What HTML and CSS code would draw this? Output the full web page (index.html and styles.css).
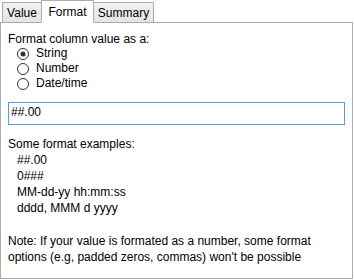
FILE: index.html
```html
<!DOCTYPE html>
<html>
<head>
<meta charset="utf-8">
<link rel="stylesheet" href="styles.css">
</head>
<body>
<div class="tabctl">
  <div class="tabs">
    <div class="tab t-value">Value</div>
    <div class="tab t-format sel">Format</div>
    <div class="tab t-summary">Summary</div>
  </div>
  <div class="panel">
    <div class="label">Format column value as a:</div>
    <div class="radios">
      <div class="radio">
        <svg width="12" height="12" viewBox="0 0 12 12"><circle cx="6" cy="6" r="5.5" fill="#fff" stroke="#333"/><circle cx="6" cy="6" r="2.5" fill="#333"/></svg>
        <span>String</span>
      </div>
      <div class="radio">
        <svg width="12" height="12" viewBox="0 0 12 12"><circle cx="6" cy="6" r="5.5" fill="#fff" stroke="#333"/></svg>
        <span>Number</span>
      </div>
      <div class="radio">
        <svg width="12" height="12" viewBox="0 0 12 12"><circle cx="6" cy="6" r="5.5" fill="#fff" stroke="#333"/></svg>
        <span>Date/time</span>
      </div>
    </div>
    <div class="input">##.00</div>
    <div class="examples">
      <div>Some format examples:</div>
      <div class="ex">##.00</div>
      <div class="ex">0###</div>
      <div class="ex">MM-dd-yy hh:mm:ss</div>
      <div class="ex">dddd, MMM d yyyy</div>
    </div>
    <div class="note">Note: If your value is formated as a number, some format<br>options (e.g, padded zeros, commas) won't be possible</div>
  </div>
</div>
</body>
</html>
```
FILE: styles.css
```css
html, body {
  margin: 0;
  padding: 0;
  background: #fff;
}
body {
  font-family: "Liberation Sans", Arial, sans-serif;
  font-size: 12px;
  color: #000;
}
.tabctl {
  width: 353px;
  height: 279px;
  display: flex;
  flex-direction: column;
}
.tabs {
  display: flex;
  align-items: flex-end;
  height: 23px;
  padding-left: 2px;
  position: relative;
  z-index: 1;
}
.tab {
  box-sizing: border-box;
  height: 21px;
  border: 1px solid #acacac;
  background: linear-gradient(#f0f0f0, #e5e5e5);
  display: flex;
  align-items: center;
  justify-content: center;
  margin-left: -1px;
}
.t-value { width: 40px; margin-left: 0; }
.t-format { width: 53px; }
.t-summary { width: 61px; }
.tab.sel {
  height: 23px;
  background: #fff;
  border-bottom-color: #fff;
  position: relative;
  z-index: 2;
}
.panel {
  flex: 1;
  box-sizing: border-box;
  border: 1px solid #acacac;
  margin-top: -1px;
  padding: 10px 7px 0 7px;
  display: flex;
  flex-direction: column;
}
.label {
  line-height: 13px;
}
.radios {
  padding-left: 9px;
}
.radio {
  display: flex;
  align-items: flex-start;
  height: 15px;
  gap: 7px;
  line-height: 15px;
}
.radio svg {
  margin-top: 2px;
  flex: none;
}
.input {
  margin-top: 11px;
  box-sizing: border-box;
  height: 23px;
  border: 1px solid #569de5;
  padding: 0 0 2px 2px;
  line-height: 19px;
}
.examples {
  margin-top: 11px;
  line-height: 16px;
}
.ex {
  padding-left: 9px;
}
.note {
  margin-top: 17px;
  line-height: 16px;
}
```
